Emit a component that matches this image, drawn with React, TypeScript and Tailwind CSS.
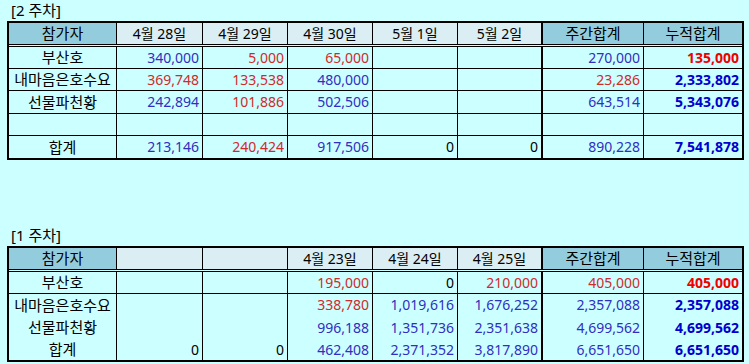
import React from "react";

type Tone = "b" | "r" | "k" | "B" | "R";
type Cell = { t: string; c?: Tone } | null;

const toneClass: Record<Tone, string> = {
  b: "text-[#2f2fc0]",
  r: "text-[#d02a2a]",
  k: "text-black",
  B: "text-[#0000cc] font-bold",
  R: "text-[#ee0000] font-bold",
};

const colW = [
  "w-[108px]",
  "w-[86px]",
  "w-[85px]",
  "w-[85px]",
  "w-[85px]",
  "w-[85px]",
  "w-[101px]",
  "w-[98px]",
];

const DARK = "bg-[#93cddd]";
const LIGHT = "bg-[#dbeef3]";

function HeaderRow({ labels }: { labels: string[] }) {
  return (
    <div className="flex h-[24px] border-b-[3px] border-double border-black">
      {labels.map((l, i) => {
        const dark = i === 0 || i >= 6;
        const br =
          i === 7 ? "" : i === 5 ? "border-r-2 border-black" : "border-r border-black";
        return (
          <div
            key={i}
            className={`${colW[i]} ${br} ${dark ? DARK : LIGHT} flex items-center justify-center ${
              i === 0 || i >= 6 ? "text-[15px]" : "text-[14px]"
            } text-black leading-none`}
          >
            {l}
          </div>
        );
      })}
    </div>
  );
}

function DataRow({
  name,
  cells,
  border,
  h,
}: {
  name: string;
  cells: Cell[];
  border: boolean;
  h: string;
}) {
  return (
    <div className={`flex ${h} ${border ? "border-b border-black" : ""}`}>
      <div
        className={`${colW[0]} border-r border-black flex items-center justify-center text-[15px] text-black leading-none whitespace-nowrap`}
      >
        {name}
      </div>
      {cells.map((c, j) => {
        const i = j + 1;
        const br =
          i === 7 ? "" : i === 5 ? "border-r-2 border-black" : "border-r border-black";
        return (
          <div
            key={i}
            className={`${colW[i]} ${br} flex items-center justify-end pr-[3px] text-[14px] leading-none ${
              c ? toneClass[c.c ?? "k"] : ""
            }`}
          >
            {c ? c.t : ""}
          </div>
        );
      })}
    </div>
  );
}

const n = (t: string, c: Tone = "k"): Cell => ({ t, c });

export default function App() {
  return (
    <div
      className="w-[749px] h-[364px] bg-[#ccffff] overflow-hidden pl-[7px]"
      style={{ fontFamily: "'Noto Sans', 'Noto Sans CJK KR', sans-serif" }}
    >
      <div className="h-[21px] pl-[4px] text-[15px] leading-[21px] text-black">[2 주차]</div>
      <div className="w-[737px] border-2 border-black">
        <HeaderRow
          labels={["참가자", "4월 28일", "4월 29일", "4월 30일", "5월 1일", "5월 2일", "주간합계", "누적합계"]}
        />
        <DataRow
          name="부산호"
          border
          h="h-[22px]"
          cells={[n("340,000", "b"), n("5,000", "r"), n("65,000", "r"), null, null, n("270,000", "b"), n("135,000", "R")]}
        />
        <DataRow
          name="내마음은호수요"
          border
          h="h-[22px]"
          cells={[n("369,748", "r"), n("133,538", "r"), n("480,000", "b"), null, null, n("23,286", "r"), n("2,333,802", "B")]}
        />
        <DataRow
          name="선물파천황"
          border
          h="h-[23px]"
          cells={[n("242,894", "b"), n("101,886", "r"), n("502,506", "b"), null, null, n("643,514", "b"), n("5,343,076", "B")]}
        />
        <DataRow name="" border h="h-[22px]" cells={[null, null, null, null, null, null, null]} />
        <DataRow
          name="합계"
          border={false}
          h="h-[22px]"
          cells={[n("213,146", "b"), n("240,424", "r"), n("917,506", "b"), n("0"), n("0"), n("890,228", "b"), n("7,541,878", "B")]}
        />
      </div>

      <div className="h-[65px]" />

      <div className="h-[21px] pl-[4px] text-[15px] leading-[21px] text-black">[1 주차]</div>
      <div className="w-[737px] border-2 border-black">
        <HeaderRow labels={["참가자", "", "", "4월 23일", "4월 24일", "4월 25일", "주간합계", "누적합계"]} />
        <DataRow
          name="부산호"
          border
          h="h-[22px]"
          cells={[null, null, n("195,000", "r"), n("0"), n("210,000", "r"), n("405,000", "r"), n("405,000", "R")]}
        />
        <DataRow
          name="내마음은호수요"
          border={false}
          h="h-[22px]"
          cells={[null, null, n("338,780", "r"), n("1,019,616", "b"), n("1,676,252", "b"), n("2,357,088", "b"), n("2,357,088", "B")]}
        />
        <DataRow
          name="선물파천황"
          border={false}
          h="h-[23px]"
          cells={[null, null, n("996,188", "b"), n("1,351,736", "b"), n("2,351,638", "b"), n("4,699,562", "b"), n("4,699,562", "B")]}
        />
        <DataRow
          name="합계"
          border={false}
          h="h-[21px]"
          cells={[n("0"), n("0"), n("462,408", "b"), n("2,371,352", "b"), n("3,817,890", "b"), n("6,651,650", "b"), n("6,651,650", "B")]}
        />
      </div>
    </div>
  );
}
